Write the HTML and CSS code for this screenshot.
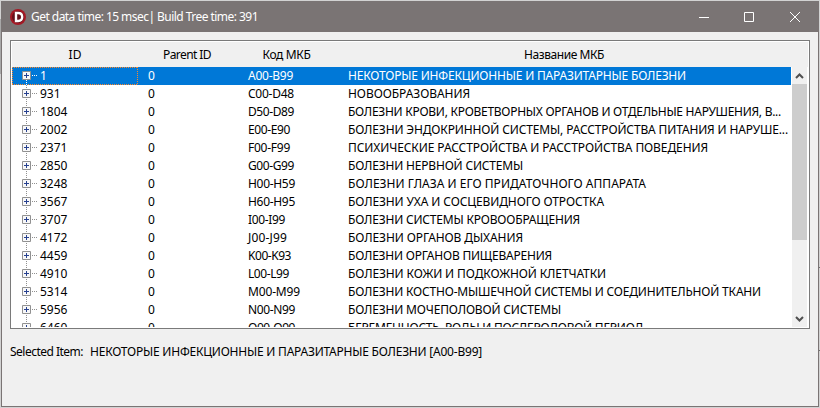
FILE: index.html
```html
<!DOCTYPE html>
<html lang="ru">
<head>
<meta charset="utf-8">
<title>Build Tree</title>
<link rel="stylesheet" href="styles.css">
</head>
<body>
<div class="window">
  <header class="titlebar">
    <svg class="logo" width="16" height="16" viewBox="0 0 16 16"><circle cx="8" cy="8" r="8" fill="#a51824"/><circle cx="8" cy="8" r="6" fill="#65101a"/><path d="M6 4H8.2C10.9 4 12.2 5.6 12.2 8S10.9 12 8.2 12H6Z" fill="none" stroke="#fff" stroke-width="2.4"/></svg>
    <span class="caption"><span data-width="227">Get data time: 15 msec| Build Tree time: 391</span></span>
    <svg class="controls" width="102" height="12" viewBox="0 0 102 12" fill="none" stroke="#fff"><path d="M0 6.5H10M45.5 1.5H54.5V10.5H45.5ZM91 1L101 11M101 1L91 11"/></svg>
  </header>
  <main class="client">
    <section class="tree">
      <div class="head"><div><span>ID</span></div><div><span data-width="48">Parent ID</span></div><div><span data-width="48">Код МКБ</span></div><div><span data-width="80">Название МКБ</span></div></div>
      <div class="body">
        <div class="rows" id="rows"></div>
        <div class="scroll">
          <svg width="15" height="17" viewBox="0 0 15 17" fill="none" stroke="#505050" stroke-width="2"><path d="M4 11L7.5 7.5L11 11"/></svg>
          <div class="thumb"></div>
          <svg class="down" width="15" height="17" viewBox="0 0 15 17" fill="none" stroke="#505050" stroke-width="2"><path d="M4 7L7.5 10.5L11 7"/></svg>
        </div>
      </div>
    </section>
    <footer class="status"><div class="label"><span data-width="73">Selected Item:</span></div><span data-width="392">НЕКОТОРЫЕ ИНФЕКЦИОННЫЕ И ПАРАЗИТАРНЫЕ БОЛЕЗНИ [A00-B99]</span></footer>
  </main>
</div>
<script src="tree.js"></script>
</body>
</html>
```
FILE: styles.css
```css
* { box-sizing: border-box; }
body { margin: 0; width: 820px; height: 408px; padding: 1px; overflow: hidden; background: linear-gradient(#a8a8a8, #a8a8a8) 0 19px / 1px 55px no-repeat, linear-gradient(#707070, #707070) 819px 267px / 1px 1px no-repeat, linear-gradient(#707070, #707070) 819px 350px / 1px 1px no-repeat, #d2d2d2; color: #000; font: 12px/18px "Noto Sans", "Open Sans", sans-serif; }
.window { width: 818px; height: 406px; border: 1px solid #7a7474; background: #f0f0f0; }
.titlebar { display: flex; align-items: center; height: 30px; padding: 0 17px 0 8px; background: #7a7474; color: #fff; }
.caption { margin-left: 5px; flex: 1; white-space: pre; }
.client { padding: 8px; }
.tree { width: 800px; height: 289px; border: 1px solid #7a7a7a; padding: 1px; background: #fff; }
.head { display: grid; grid-template-columns: 126px 97px 103px 1fr; height: 25px; line-height: 26px; background: #f0f0f0; text-align: center; white-space: pre; }
.head div:nth-child(2) { padding-left: 1px; }
.head div:last-child { padding-right: 18px; }
.body { display: flex; height: 260px; }
.rows { width: 779px; overflow: hidden; }
.row { display: grid; grid-template-columns: 136px 100px 100px 443px; height: 18px; white-space: pre; }
.id { display: flex; padding-left: 10px; }
.id svg { flex: none; margin-right: 1px; }
.selected { background: #0078d7; color: #fff; }
.selected .id {
  width: 126px;
  background:
    repeating-linear-gradient(90deg, #ff8728 0 1px, transparent 1px 2px) 0 0 / 100% 1px no-repeat,
    repeating-linear-gradient(90deg, #ff8728 0 1px, transparent 1px 2px) 0 100% / 100% 1px no-repeat,
    repeating-linear-gradient(#ff8728 0 1px, transparent 1px 2px) 0 0 / 1px 100% no-repeat,
    repeating-linear-gradient(#ff8728 0 1px, transparent 1px 2px) 100% 0 / 1px 100% no-repeat;
}
.scroll { display: flex; flex-direction: column; width: 15px; margin-left: 1px; background: #f0f0f0; }
.thumb { height: 156px; background: #cdcdcd; }
.down { margin-top: auto; }
.status { display: flex; margin-top: 14px; white-space: pre; }
.label { width: 80px; }
```
FILE: tree.js
```js
// id, code, name, code width, name width
const items = [
  [1, 'A00-B99', 'НЕКОТОРЫЕ ИНФЕКЦИОННЫЕ И ПАРАЗИТАРНЫЕ БОЛЕЗНИ', 45, 338],
  [931, 'C00-D48', 'НОВООБРАЗОВАНИЯ', 46, 122],
  [1804, 'D50-D89', 'БОЛЕЗНИ КРОВИ, КРОВЕТВОРНЫХ ОРГАНОВ И ОТДЕЛЬНЫЕ НАРУШЕНИЯ, В...', 46, 433],
  [2002, 'E00-E90', 'БОЛЕЗНИ ЭНДОКРИННОЙ СИСТЕМЫ, РАССТРОЙСТВА ПИТАНИЯ И НАРУШЕ...', 42, 440],
  [2371, 'F00-F99', 'ПСИХИЧЕСКИЕ РАССТРОЙСТВА И РАССТРОЙСТВА ПОВЕДЕНИЯ', 42, 360],
  [2850, 'G00-G99', 'БОЛЕЗНИ НЕРВНОЙ СИСТЕМЫ', 46, 175],
  [3248, 'H00-H59', 'БОЛЕЗНИ ГЛАЗА И ЕГО ПРИДАТОЧНОГО АППАРАТА', 47, 298],
  [3567, 'H60-H95', 'БОЛЕЗНИ УХА И СОСЦЕВИДНОГО ОТРОСТКА', 47, 256],
  [3707, 'I00-I99', 'БОЛЕЗНИ СИСТЕМЫ КРОВООБРАЩЕНИЯ', 37, 232],
  [4172, 'J00-J99', 'БОЛЕЗНИ ОРГАНОВ ДЫХАНИЯ', 39, 175],
  [4459, 'K00-K93', 'БОЛЕЗНИ ОРГАНОВ ПИЩЕВАРЕНИЯ', 43, 204],
  [4910, 'L00-L99', 'БОЛЕЗНИ КОЖИ И ПОДКОЖНОЙ КЛЕТЧАТКИ', 41, 258],
  [5314, 'M00-M99', 'БОЛЕЗНИ КОСТНО-МЫШЕЧНОЙ СИСТЕМЫ И СОЕДИНИТЕЛЬНОЙ ТКАНИ', 52, 413],
  [5956, 'N00-N99', 'БОЛЕЗНИ МОЧЕПОЛОВОЙ СИСТЕМЫ', 47, 213],
  [6460, 'O00-O99', 'БЕРЕМЕННОСТЬ, РОДЫ И ПОСЛЕРОДОВОЙ ПЕРИОД', 47, 295]
];
document.getElementById('rows').innerHTML = items.map(([id, code, name, codeWidth, nameWidth], i) => `
<div class="row${i ? '' : ' selected'}"><div class="id"><svg width="17" height="18" viewBox="0 0 17 18" fill="none"><path d="M4.5 ${i ? 0 : 9}V18M10 8.5H15" stroke="${i ? '#909090' : '#fff'}" stroke-dasharray="1 1"/><path d="M.5 4.5H8.5V12.5H.5Z" fill="#f8f8f8" stroke="#919191"/><path d="M2 8.5H7M4.5 6V11" stroke="#27418f"/></svg><span>${id}</span></div><div>0</div><div><span data-width="${codeWidth}">${code}</span></div><div><span data-width="${nameWidth}">${name}</span></div></div>`).join('');

// Fit the tracking of each label to its column text width.
for (const label of document.querySelectorAll('[data-width]')) {
  const gap = label.dataset.width - label.getBoundingClientRect().width;
  label.style.letterSpacing = `${gap / label.textContent.length}px`;
}
```
